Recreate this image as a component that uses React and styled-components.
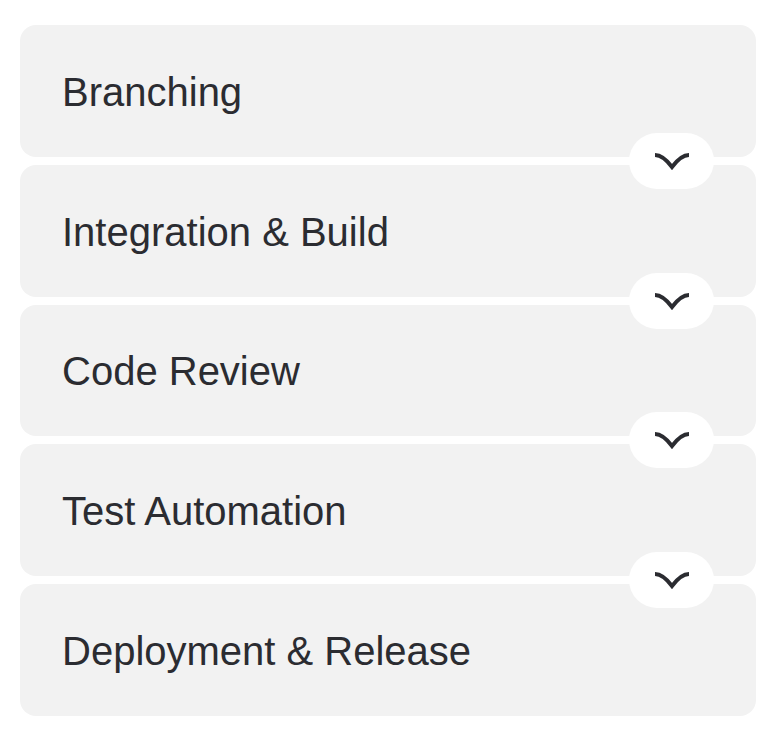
import React from 'react'
import styled, { createGlobalStyle } from 'styled-components'

const GlobalStyle = createGlobalStyle`
  body {
    margin: 0;
    background: #ffffff;
    font-family: "Liberation Sans", Arial, sans-serif;
  }
`

const List = styled.div`
  display: flex;
  flex-direction: column;
  gap: 8px;
  padding: 25px 20px;
`

const Card = styled.div`
  position: relative;
  height: 131.8px;
  display: flex;
  align-items: center;
  padding: 0 42px;
  background: #f2f2f2;
  border-radius: 16px;
  z-index: ${p => p.$layer};
`

const Title = styled.div`
  font-size: 40px;
  color: #2b2c31;
  padding-top: 3px;
`

const Toggle = styled.div`
  position: absolute;
  right: 42px;
  bottom: -32px;
  width: 85px;
  height: 56px;
  border-radius: 28px;
  background: #ffffff;
  display: flex;
  align-items: center;
  justify-content: center;
`

const Chevron = () => (
  <svg width="38" height="20" viewBox="0 0 38 20" fill="none">
    <path
      d="M2 4 C8 4 13 8 19 16 C25 8 30 4 36 4"
      stroke="#2b2c31"
      strokeWidth="4"
      strokeLinejoin="miter"
    />
  </svg>
)

const steps = [
  'Branching',
  'Integration & Build',
  'Code Review',
  'Test Automation',
  'Deployment & Release',
]

export default function App() {
  return (
    <>
      <GlobalStyle />
      <List>
        {steps.map((s, i) => (
          <Card key={s} $layer={steps.length - i}>
            <Title>{s}</Title>
            {i < steps.length - 1 && (
              <Toggle>
                <Chevron />
              </Toggle>
            )}
          </Card>
        ))}
      </List>
    </>
  )
}
